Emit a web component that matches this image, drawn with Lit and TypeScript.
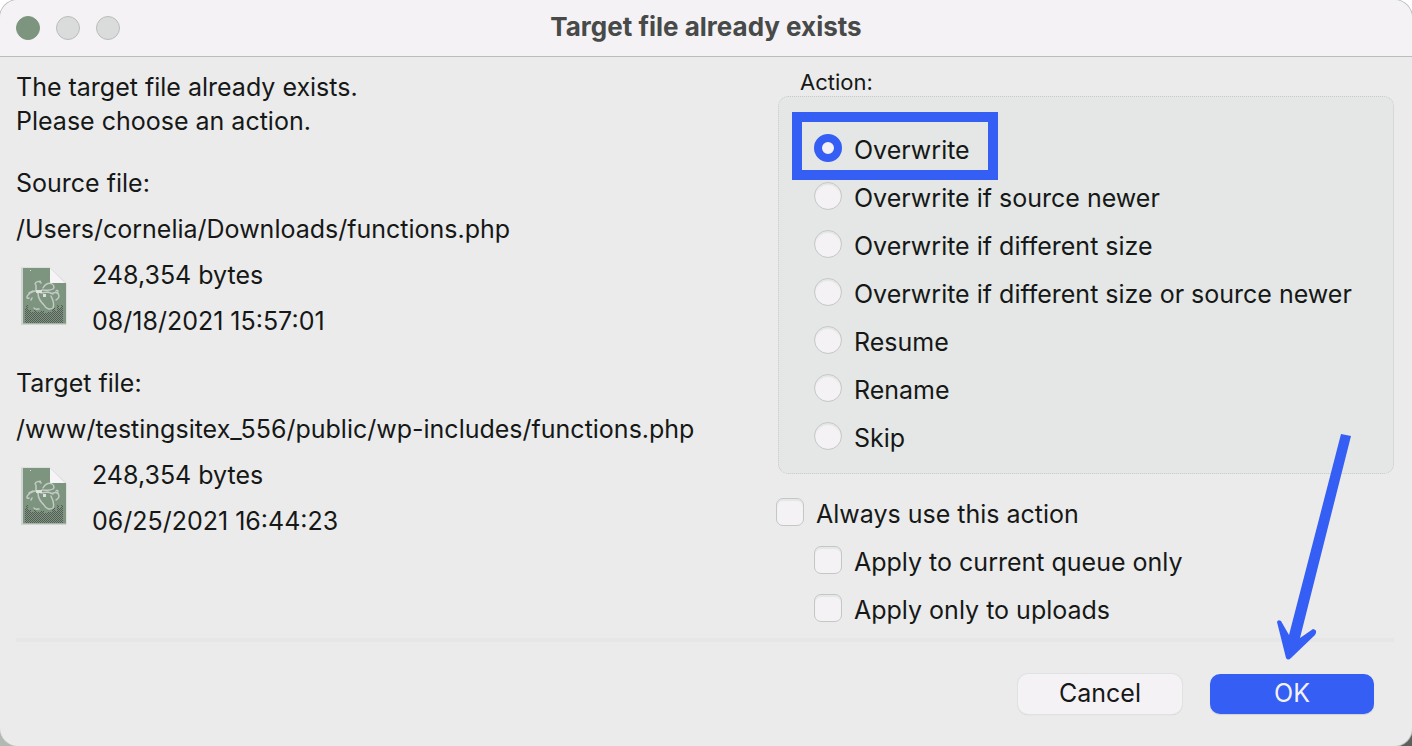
import { LitElement, html, css, svg } from "lit";
import { customElement, property, state } from "lit/decorators.js";

@customElement("file-summary")
class FileSummary extends LitElement {
  @property() heading = "";
  @property() path = "";
  @property() size = "";
  @property() modified = "";

  static styles = css`
    :host { display: block; }
    .line { margin: 0 0 12px; line-height: 34px; overflow-wrap: anywhere; }
    .details { display: flex; gap: 22px; }
    .icon { flex: none; width: 54px; height: 68px; margin-top: 4px; }
    .details .line:last-child { margin-bottom: 0; }
  `;

  render() {
    return html`
      <p class="line">${this.heading}</p>
      <p class="line">${this.path}</p>
      <div class="details">
        <svg class="icon" viewBox="0 0 54 68" aria-hidden="true">
          <defs>
            <pattern id="weave" width="2" height="2" patternUnits="userSpaceOnUse">
              <path d="M0 0h1v1H0zM1 1h1v1H1z" fill="#555c58" />
            </pattern>
          </defs>
          <path d="M5 5.500h29l16.500 16V63H5z" fill="#cfd3d1" />
          <path d="M34 6v15h15z" fill="#f6f4f7" />
          <path d="M7 6h27v15h16v40.500H7z" fill="#7d947f" />
          <path d="M9 61V46h1v-3h2v5h3v2h3v-3h2v3h4v-1h4v2h4v-1h4v-4h3v3h2v-6h2v3h2v-3h2v18z" fill="url(#weave)" />
          <g fill="none" stroke="#c3cbc5" stroke-width="1.500" stroke-linecap="round" stroke-linejoin="round">
            <path d="M19 22c1-3 4-3 6-1M24 19l1 2M20 23v5l2 3" />
            <path d="M20 29c-4 0-6 2-8 4s-1 4 1 3M13 31l4-2M15 38l1-2" />
            <path d="M27 26c2-4 6-6 9-4s2 4 1 5c-3 2-7 1-11 1" />
            <path d="M22 31c0 6 3 9 6 12 2 4 6 5 9 3 2-4 0-8-2-12M25 31l7-1 5 2" />
            <path d="M37 31c3-1 6 0 6 3s-2 3-3 4M40 29c1-1 2-1 2 1" />
            <path d="M18 46c1 2 4 1 5 1" />
          </g>
          <path d="M20 28h6v3h-6zM27 32h3v3h-3z" fill="#dde1de" />
          <path d="M14 8h1v1h-1z" fill="#dde1de" />
        </svg>
        <div>
          <p class="line">${this.size}</p>
          <p class="line">${this.modified}</p>
        </div>
      </div>
    `;
  }
}

const ACTIONS = [
  "Overwrite",
  "Overwrite if source newer",
  "Overwrite if different size",
  "Overwrite if different size or source newer",
  "Resume",
  "Rename",
  "Skip",
];

@customElement("app-root")
class AppRoot extends LitElement {
  @state() selected = 0;

  static styles = css`
    * { box-sizing: border-box; }
    :host {
      display: block;
      background:
        linear-gradient(#fff, #fff) top / 100% 50% no-repeat,
        linear-gradient(90deg, #b2b8b4 50%, #5c605d 50%);
      font-family: Inter, "Liberation Sans", sans-serif;
      font-size: 25px;
      color: #161817;
    }
    .window {
      display: flex;
      flex-direction: column;
      min-height: 100vh;
      border-radius: 18px;
      background: #ebebeb;
      box-shadow: 0 0 0 1px #b9bdbb;
      overflow: hidden;
    }
    .titlebar {
      display: grid;
      grid-template-columns: 1fr auto 1fr;
      align-items: center;
      height: 57px;
      padding: 0 16px;
      background: #f4f2f5;
      border-bottom: 1px solid #b9bdbb;
    }
    .lights { display: flex; gap: 16px; }
    .light {
      width: 24px;
      height: 24px;
      padding: 0;
      border: 1px solid #b9bdbb;
      border-radius: 50%;
      background: #d9dcda;
    }
    .light.close { background: #7d947f; border-color: #7d947f; }
    h1 { margin: 0; font-size: 26px; line-height: 34px; font-weight: 700; color: #474a48; padding-bottom: 2px; }
    .content {
      display: grid;
      grid-template-columns: 760fr 618fr;
      padding: 13px 18px 4px 16px;
    }
    .message { margin: 0 0 28px; line-height: 34px; }
    .files { display: grid; gap: 28px; }
    fieldset { margin: 0; padding: 0; border: 0; min-width: 0; }
    legend { padding: 0 0 2px 24px; font-size: 22px; line-height: 24px; }
    .panel {
      display: grid;
      justify-items: start;
      margin-left: 2px;
      padding: 29px 12px 11px 35px;
      border: 1px dotted #c6cac8;
      border-radius: 10px;
      background: #e4e7e5;
    }
    .choice {
      position: relative;
      display: flex;
      align-items: center;
      gap: 12px;
      min-height: 48px;
      line-height: 34px;
    }
    input {
      appearance: none;
      flex: none;
      width: 28px;
      height: 28px;
      margin: 0 0 4px;
      border: 1px solid #c3c7c5;
      background: #f4f2f5;
      box-shadow: inset 0 2px 1px #e4e7e5;
    }
    input[type="radio"] { border-radius: 50%; }
    input[type="checkbox"] { border-radius: 7px; }
    input[type="radio"]:checked { border: 8px solid #355ff4; box-shadow: none; }
    input[type="checkbox"]:checked { background: #355ff4; }
    .highlight {
      position: absolute;
      inset: -14px -28px -6px -22px;
      border: 10px solid #355ff4;
      pointer-events: none;
    }
    .options { display: grid; justify-items: start; padding-top: 16px; }
    .nested { margin-left: 38px; }
    .footer {
      display: flex;
      justify-content: flex-end;
      gap: 28px;
      margin: 0 18px 0 16px;
      padding: 32px 20px 31px;
      border-top: 4px solid #e4e7e5;
    }
    .button {
      position: relative;
      width: 164px;
      height: 40px;
      padding: 0 0 2px;
      border: 0;
      border-radius: 10px;
      background: #f4f2f5;
      box-shadow: 0 0 0 1px #dfe2e0, 0 1px 1px #b9bdbb;
      color: inherit;
      font: inherit;
    }
    .button.primary { background: #355ff4; color: #f4f2f5; box-shadow: 0 1px 1px #cfd2d0; }
    .arrow {
      position: absolute;
      right: 22px;
      bottom: 54px;
      width: 76px;
      height: 228px;
      pointer-events: none;
    }
  `;

  render() {
    return html`
      <main class="window">
        <header class="titlebar">
          <div class="lights">
            <button class="light close" aria-label="Close"></button>
            <button class="light" aria-label="Minimize" disabled></button>
            <button class="light" aria-label="Zoom" disabled></button>
          </div>
          <h1>Target file already exists</h1>
        </header>
        <div class="content">
          <section>
            <p class="message">The target file already exists.<br />Please choose an action.</p>
            <div class="files">
              <file-summary
                heading="Source file:"
                path="/Users/cornelia/Downloads/functions.php"
                size="248,354 bytes"
                modified="08/18/2021 15:57:01"
              ></file-summary>
              <file-summary
                heading="Target file:"
                path="/www/testingsitex_556/public/wp-includes/functions.php"
                size="248,354 bytes"
                modified="06/25/2021 16:44:23"
              ></file-summary>
            </div>
          </section>
          <section>
            <fieldset>
              <legend>Action:</legend>
              <div class="panel">
                ${ACTIONS.map(
                  (name, i) => html`
                    <label class="choice">
                      <input
                        type="radio"
                        name="action"
                        .checked=${this.selected === i}
                        @change=${() => (this.selected = i)}
                      />
                      <span>${name}</span>
                      ${i === 0 ? html`<span class="highlight"></span>` : null}
                    </label>
                  `
                )}
              </div>
            </fieldset>
            <div class="options">
              <label class="choice"><input type="checkbox" /><span>Always use this action</span></label>
              <label class="choice nested"><input type="checkbox" /><span>Apply to current queue only</span></label>
              <label class="choice nested"><input type="checkbox" /><span>Apply only to uploads</span></label>
            </div>
          </section>
        </div>
        <footer class="footer">
          <button class="button">Cancel</button>
          <button class="button primary">
            OK
            <svg class="arrow" viewBox="0 0 76 228" aria-hidden="true">
              ${svg`<path fill="#355ff4" d="M65 2L75 4L24 206L37 197Q42 198 39 203L15 226Q12 229 10 226L1 190Q2 187 5 189L13 203Z" />`}
            </svg>
          </button>
        </footer>
      </main>
    `;
  }
}
